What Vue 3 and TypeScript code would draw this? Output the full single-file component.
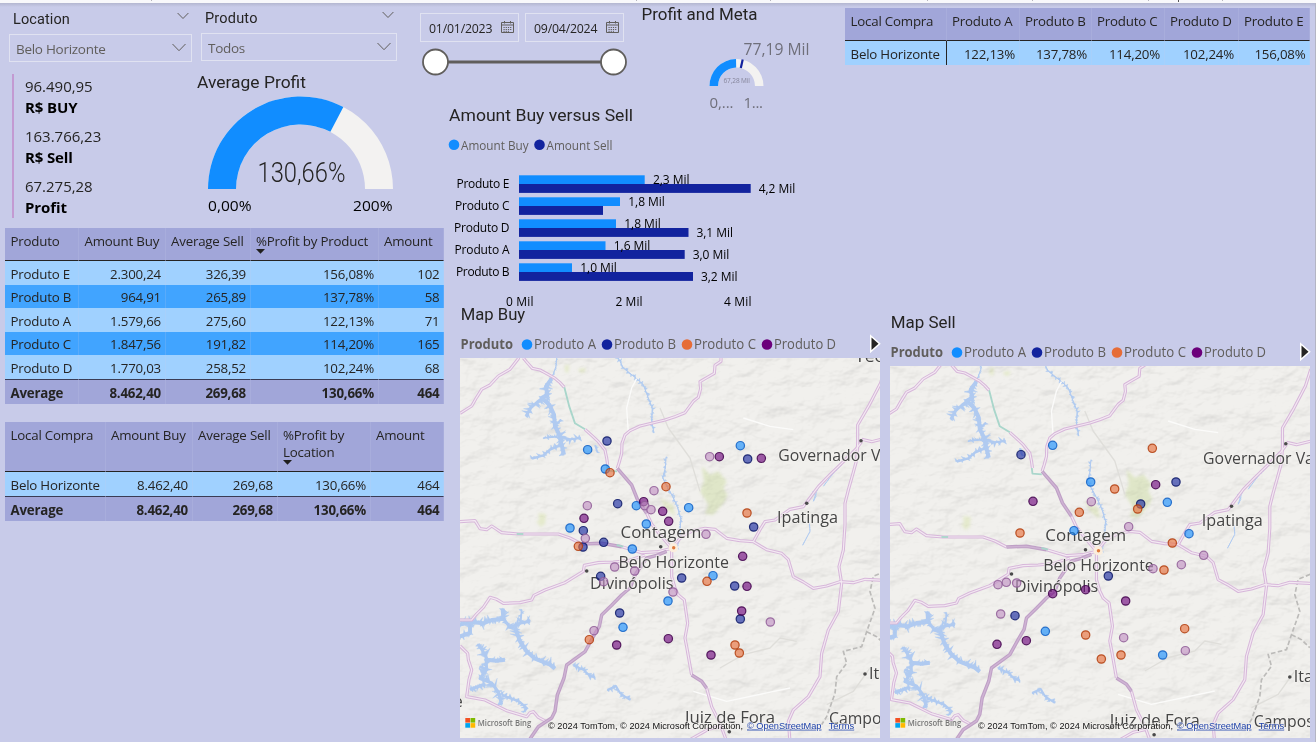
<script setup lang="ts">
type Pt = [number, number]
type Product = 'A' | 'B' | 'C' | 'D' | 'E'

interface DataTable {
  id: string
  columns: { label: string; sorted?: boolean }[]
  rows: string[][]
  total?: string[]
}

const productTable: DataTable = {
  id: 'products',
  columns: [
    { label: 'Produto' },
    { label: 'Amount Buy' },
    { label: 'Average Sell' },
    { label: '%Profit by Product', sorted: true },
    { label: 'Amount' },
  ],
  rows: [
    ['Produto E', '2.300,24', '326,39', '156,08%', '102'],
    ['Produto B', '964,91', '265,89', '137,78%', '58'],
    ['Produto A', '1.579,66', '275,60', '122,13%', '71'],
    ['Produto C', '1.847,56', '191,82', '114,20%', '165'],
    ['Produto D', '1.770,03', '258,52', '102,24%', '68'],
  ],
  total: ['Average', '8.462,40', '269,68', '130,66%', '464'],
}

const locationTable: DataTable = {
  id: 'locations',
  columns: [
    { label: 'Local Compra' },
    { label: 'Amount Buy' },
    { label: 'Average Sell' },
    { label: '%Profit by Location', sorted: true },
    { label: 'Amount' },
  ],
  rows: [['Belo Horizonte', '8.462,40', '269,68', '130,66%', '464']],
  total: ['Average', '8.462,40', '269,68', '130,66%', '464'],
}

const matrix: DataTable = {
  id: 'matrix',
  columns: ['Local Compra', 'Produto A', 'Produto B', 'Produto C', 'Produto D', 'Produto E'].map((label) => ({ label })),
  rows: [['Belo Horizonte', '122,13%', '137,78%', '114,20%', '102,24%', '156,08%']],
}

const cards = [
  { value: '96.490,95', label: 'R$ BUY' },
  { value: '163.766,23', label: 'R$ Sell' },
  { value: '67.275,28', label: 'Profit' },
]

const filters = [
  { title: 'Location', value: 'Belo Horizonte', id: 'location' },
  { title: 'Produto', value: 'Todos', id: 'product' },
]

const dates = ['01/01/2023', '09/04/2024']

/* Annular sector; angles in degrees measured clockwise from the left end. */
function arc(cx: number, cy: number, outer: number, inner: number, from: number, to: number): string {
  const at = (r: number, deg: number) => {
    const a = (deg * Math.PI) / 180
    return `${(cx - r * Math.cos(a)).toFixed(2)} ${(cy - r * Math.sin(a)).toFixed(2)}`
  }
  return `M${at(outer, from)}A${outer} ${outer} 0 0 1 ${at(outer, to)}L${at(inner, to)}A${inner} ${inner} 0 0 0 ${at(inner, from)}Z`
}

const bars = [
  { name: 'Produto E', nameW: 53, buy: 125.7, buyLabel: '2,3 Mil', sell: 231.7, sellLabel: '4,2 Mil' },
  { name: 'Produto C', nameW: 54.5, buy: 101, buyLabel: '1,8 Mil', sell: 84, sellLabel: '' },
  { name: 'Produto D', nameW: 55.5, buy: 97, buyLabel: '1,8 Mil', sell: 169.5, sellLabel: '3,1 Mil' },
  { name: 'Produto A', nameW: 55, buy: 86.5, buyLabel: '1,6 Mil', sell: 165.7, sellLabel: '3,0 Mil' },
  { name: 'Produto B', nameW: 53.5, buy: 53, buyLabel: '1,0 Mil', sell: 174, sellLabel: '3,2 Mil' },
]

/* Map geography, in thirds of a pixel. */
const roads: string[] = [
  'M0 166L35 144L50 118L65 94L90 81L115 54L150 34L175 2L178 -10',
  'M190 0L200 12L217 31L240 36L255 44L285 61L300 74L313 88',
  'M375 214L395 232L415 251L435 276L440 300L443 321',
  'M783 -10L783 10L765 22L763 46L735 62L720 71L722 92L715 118L700 130L675 164L645 176L615 186L540 204L510 218L495 231L486 256L485 286L478 312L472 331',
  'M560 466L575 498L600 530L635 571',
  'M0 491L45 488L60 512L80 515L95 504L125 524L175 528L295 528L330 540L365 558',
  'M485 566L545 584L595 581L635 571',
  'M0 786L35 786L50 768L70 748L90 718L110 724L130 736L180 734L215 726L222 712L255 696L315 674L370 640L373 622L415 614L460 612L505 608L555 591',
  'M0 864L23 886L25 905L35 936L27 965L20 1016L75 1026L140 1058L200 1076L210 1064L220 1061L235 1078L258 1090',
  'M635 576L635 656L645 690L655 711L673 726L683 796L675 840L680 866L695 951',
  'M740 991L755 1046L780 1096L800 1150',
  'M640 566L665 535L700 518L735 511L765 514L800 541L840 548L880 551L920 575L965 586L985 605L1000 656L1030 672L1060 691L1100 684L1140 671L1180 674L1215 664L1290 668',
  'M880 551L900 515L915 491L945 486L990 454L1030 446L1045 426L1075 386L1110 350L1145 316L1190 271L1205 251',
  'M1278 25L1262 75L1225 146L1193 201L1193 256L1190 306L1178 350L1165 396L1155 436L1155 501L1150 576L1137 626L1145 676L1135 761L1105 816L1085 886L1080 956L1045 1016L1000 1056L985 1090L990 1150',
  'M1205 244L1235 251L1280 240',
  'M690 1145L745 1114L780 1106',
]
const trunkRoads: string[] = [
  'M472 331L515 381L533 426L560 466',
  'M365 558L425 556L485 566',
  'M620 580L590 592L560 600L525 651L510 690L485 711L455 742L425 771L418 805L400 836L375 881L320 921L312 960L292 1011L285 1060L275 1080L235 1106L205 1150',
  'M695 951L725 970L740 991',
]
const tealRoads: string[] = ['M313 88L328 146L345 196L375 214', 'M441 321L443 338L471 340', 'M470 561L490 566', 'M170 528L190 528']

/* Polylines of water bodies with their main width. */
const water: { pts: Pt[]; w: number; spike: number }[] = [
  { pts: [[290, 0], [288, 25], [275, 62]], w: 3, spike: 5 },
  { pts: [[275, 62], [258, 85], [262, 110], [245, 120], [268, 140], [282, 170], [285, 205], [298, 230], [305, 262], [312, 290]], w: 12, spike: 20 },
  { pts: [[262, 110], [232, 132], [212, 150], [198, 175]], w: 9, spike: 20 },
  { pts: [[298, 235], [330, 244], [362, 240]], w: 6, spike: 16 },
  { pts: [[305, 260], [270, 275], [250, 292], [216, 302]], w: 7, spike: 12 },
  { pts: [[285, 205], [303, 185]], w: 5, spike: 12 },
  { pts: [[292, 236], [250, 240]], w: 5, spike: 10 },
  { pts: [[475, 0], [490, 30], [530, 62], [550, 80], [565, 120], [577, 150], [575, 190], [582, 225]], w: 3, spike: 9 },
  { pts: [[618, 298], [616, 330], [608, 360], [630, 400], [650, 440], [662, 480], [660, 540], [648, 575]], w: 3, spike: 8 },
  { pts: [[405, 262], [413, 284]], w: 5, spike: 8 },
  { pts: [[0, 800], [35, 792], [70, 796], [95, 786], [130, 782], [128, 752]], w: 12, spike: 22 },
  { pts: [[0, 835], [30, 825], [30, 798]], w: 12, spike: 18 },
  { pts: [[130, 782], [150, 808], [178, 796], [210, 790]], w: 9, spike: 20 },
  { pts: [[182, 796], [185, 755]], w: 5, spike: 10 },
  { pts: [[165, 808], [180, 850], [200, 880], [225, 902], [270, 920], [285, 932]], w: 12, spike: 20 },
  { pts: [[55, 858], [78, 895], [80, 935], [60, 962], [95, 975], [115, 1002], [125, 1040]], w: 9, spike: 22 },
  { pts: [[78, 905], [110, 908], [135, 905]], w: 12, spike: 12 },
  { pts: [[80, 935], [60, 925]], w: 8, spike: 12 },
  { pts: [[30, 995], [75, 978]], w: 9, spike: 16 },
  { pts: [[125, 1012], [155, 1022], [180, 1032], [200, 1050], [193, 1062]], w: 7, spike: 14 },
  { pts: [[340, 922], [372, 936], [390, 955], [405, 958]], w: 6, spike: 14 },
  { pts: [[442, 996], [468, 984], [480, 1005], [510, 1026]], w: 6, spike: 12 },
  { pts: [[1058, 400], [1068, 415], [1060, 430], [1075, 385]], w: 2, spike: 3 },
  { pts: [[1090, 385], [1120, 345], [1145, 320]], w: 3, spike: 2 },
  { pts: [[1048, 492], [1050, 520], [1028, 562]], w: 3, spike: 2 },
]

/* Repeatable noise so that inlets keep their place between renders. */
function noise(n: number): number {
  const v = Math.sin(n * 127.1 + 311.7) * 43758.5453
  return v - Math.floor(v)
}

/* Short jagged inlets on both sides of a shore line. */
function inlets(pts: Pt[], size: number, seed: number): string {
  let d = ''
  let k = seed * 50
  const half = Math.min(4.5, size / 3)
  for (let i = 1; i < pts.length; i++) {
    const [ax, ay] = pts[i - 1]
    const [bx, by] = pts[i]
    const len = Math.hypot(bx - ax, by - ay)
    const n = Math.max(1, Math.round(len / 4.5))
    const ux = (bx - ax) / len
    const uy = (by - ay) / len
    for (let j = 0; j < n; j++) {
      const t = (j + noise(++k)) / n
      const side = noise(++k) > 0.5 ? 1 : -1
      const l = size * (0.3 + noise(++k) * 0.75)
      const lean = (noise(++k) - 0.5) * l * 1.6
      const x = ax + (bx - ax) * t
      const y = ay + (by - ay) * t
      const ex = x - uy * side * l + ux * lean
      const ey = y + ux * side * l + uy * lean
      d += `M${(x - ux * half).toFixed(1)} ${(y - uy * half).toFixed(1)}L${ex.toFixed(1)} ${ey.toFixed(1)}L${(x + ux * half).toFixed(1)} ${(y + uy * half).toFixed(1)}Z`
    }
  }
  return d
}

const lakes = water.map((body, i) => ({
  line: 'M' + body.pts.map((p) => p.join(' ')).join('L'),
  shore: inlets(body.pts, body.spike, i + 1),
  w: body.w,
}))

const places = [
  { name: 'Teófilo Otoni', x: 395, y: 4.3, w: 106 },
  { name: 'Governador Valadares', x: 318.3, y: 103.3, w: 165 },
  { name: 'Ipatinga', x: 317, y: 164.7, w: 61 },
  { name: 'Contagem', x: 160.5, y: 179.9, w: 81 },
  { name: 'Belo Horizonte', x: 158.5, y: 210.3, w: 110.5 },
  { name: 'Divinópolis', x: 130, y: 231.3, w: 83.5 },
  { name: 'Juiz de Fora', x: 225, y: 364.9, w: 90 },
  { name: 'Campos', x: 369, y: 366, w: 60 },
  { name: 'Itaperuna', x: 409, y: 321.3, w: 73 },
]
const townDots: Pt[] = [[401, 82.7], [346.7, 145.3], [200.7, 188.7], [126.7, 213], [269.3, 373.7], [405, 316]]

const palette: Record<Product, { fill: string; stroke: string }> = {
  A: { fill: '#118dff', stroke: '#0f5fc4' },
  B: { fill: '#12239e', stroke: '#0c1766' },
  C: { fill: '#e66c37', stroke: '#b23c0c' },
  D: { fill: '#6b007b', stroke: '#41004b' },
  E: { fill: '#c08fc4', stroke: '#8f5d96' },
}

interface MapPanel {
  id: string
  title: string
  height: number
  shift: Pt
  points: Record<Product, Pt[]>
}

const maps: MapPanel[] = [
  {
    id: 'buy',
    title: 'Map Buy',
    height: 380,
    shift: [0, 0],
    points: {
      A: [[382, 274], [435, 332], [528, 442], [558, 497], [329, 509], [516, 572], [488, 807], [623, 728], [758, 652], [840, 262], [685, 448]],
      B: [[440, 248], [472, 436], [369, 517], [368, 566], [430, 552], [421, 654], [478, 764], [862, 302], [880, 506], [664, 659], [823, 683], [840, 782]],
      C: [[449, 343], [617, 385], [860, 464], [354, 564], [387, 844], [740, 669], [824, 860], [837, 884]],
      D: [[550, 430], [607, 459], [625, 489], [371, 480], [777, 295], [903, 300], [847, 594], [860, 684], [844, 758], [752, 890], [624, 841], [469, 860]],
      E: [[381, 442], [581, 397], [553, 442], [572, 454], [748, 295], [375, 540], [463, 626], [523, 638], [430, 670], [401, 817], [737, 528], [638, 701], [930, 791]],
    },
  },
  {
    id: 'sell',
    title: 'Map Sell',
    height: 372,
    shift: [-5.2, -5],
    points: {
      A: [[487, 237], [601, 347], [831, 408], [551, 493], [896, 502], [465, 795], [817, 866]],
      B: [[392, 265], [857, 347], [751, 413], [654, 629], [374, 748]],
      C: [[786, 246], [673, 368], [567, 438], [742, 428], [389, 500], [846, 530], [821, 611], [586, 806], [883, 787], [633, 878], [692, 866]],
      D: [[428, 405], [796, 355], [487, 682], [586, 670], [706, 704], [320, 834], [408, 823]],
      E: [[603, 406], [715, 481], [940, 567], [873, 595], [788, 607], [323, 655], [348, 648], [379, 650], [331, 743], [700, 814], [885, 853]],
    },
  },
]

const order: Product[] = ['A', 'B', 'C', 'D', 'E']
const legend: Product[] = ['A', 'B', 'C', 'D']
</script>

<template>
  <div class="page">
    <svg class="strip" width="1316" height="3" viewBox="0 0 1316 3">
      <path d="M151.5 0v1M636.5 0v1M770.5 0v1M927.5 0v1M1032.500 0v1M1148.500 0v1M1222.500 0v1" stroke="#b5b5bd" />
      <path d="M1178.500 0v2" stroke="#555" />
    </svg>

    <main class="report">
      <section class="left">
        <div class="filters">
          <div v-for="f in filters" :key="f.id" class="filter" :class="f.id">
            <header>
              <span class="title">{{ f.title }}</span>
              <svg width="12" height="8" viewBox="0 0 12 8"><path d="M.6 1L6 6.500L11.400 1" class="chevron" /></svg>
            </header>
            <div class="select">
              <span>{{ f.value }}</span>
              <svg width="14" height="9" viewBox="0 0 14 9"><path d="M.5 1L7 7.700L13.500 1" class="chevron" /></svg>
            </div>
          </div>
        </div>

        <div class="summary">
          <dl class="cards">
            <div v-for="c in cards" :key="c.label">
              <dd>{{ c.value }}</dd>
              <dt>{{ c.label }}</dt>
            </div>
          </dl>
          <svg class="gauge" width="215" height="150" viewBox="190 70 215 150">
            <text class="din" x="197" y="88" textLength="109" lengthAdjust="spacingAndGlyphs">Average Profit</text>
            <path :d="arc(300.5, 189, 92.500, 64.500, 0, 180)" fill="#f3f2f1" />
            <path :d="arc(300.5, 189, 92.500, 64.500, 0, 117.600)" fill="#118dff" />
            <text class="thin" x="257.500" y="181.500" font-size="28.500" textLength="88" lengthAdjust="spacingAndGlyphs">130,66%</text>
            <text x="208" y="211" font-size="15" textLength="43.500" lengthAdjust="spacingAndGlyphs">0,00%</text>
            <text x="353" y="211" font-size="15" textLength="39.500" lengthAdjust="spacingAndGlyphs">200%</text>
          </svg>
        </div>

        <table v-for="t in [productTable, locationTable]" :key="t.id" class="grid" :class="t.id">
          <colgroup><col v-for="c in t.columns" :key="c.label" /></colgroup>
          <thead>
            <tr>
              <th v-for="c in t.columns" :key="c.label">
                {{ c.label }}
                <svg v-if="c.sorted" class="sort" width="9" height="5" viewBox="0 0 9 5"><path d="M0 0H9L4.500 4.800Z" fill="#201f1e" /></svg>
              </th>
            </tr>
          </thead>
          <tbody>
            <tr v-for="r in t.rows" :key="r[0]"><td v-for="(v, i) in r" :key="i">{{ v }}</td></tr>
          </tbody>
          <tfoot>
            <tr><td v-for="(v, i) in t.total" :key="i">{{ v }}</td></tr>
          </tfoot>
        </table>
      </section>

      <section class="right">
        <div class="upper">
          <div class="metrics">
            <div class="controls">
              <div class="slicer">
                <div class="dates">
                  <div v-for="d in dates" :key="d" class="date">
                    <span>{{ d }}</span>
                    <svg width="13" height="13" viewBox="0 0 13 13" fill="none" stroke="#605e5c">
                      <path d="M.5 1.500H12.500V11.500H.5ZM.5 4H12.500M3.500 0V2.500M9.500 0V2.500" />
                      <path d="M2.500 6.500H11M2.500 8.500H11M2.500 10.300H8" stroke-dasharray="1.200 1" />
                    </svg>
                  </div>
                </div>
                <svg class="track" width="207" height="28" viewBox="0 0 207 28">
                  <path d="M15 14H194" stroke="#605e5c" stroke-width="3" />
                  <circle cx="15.500" cy="14" r="12.500" /><circle cx="193.500" cy="14" r="12.500" />
                </svg>
              </div>
              <svg class="meta" width="200" height="112" viewBox="638 3 200 112">
                <text class="din" x="641.500" y="20" textLength="116" lengthAdjust="spacingAndGlyphs">Profit and Meta</text>
                <text class="muted" x="743.500" y="55" font-size="15.500" textLength="66" lengthAdjust="spacingAndGlyphs">77,19 Mil</text>
                <path :d="arc(736.500, 86, 27, 18.500, 0, 180)" fill="#f3f2f1" />
                <path :d="arc(736.500, 86, 27, 18.500, 0, 89)" fill="#118dff" />
                <path d="M742.700 59.500L740.800 68" stroke="#12239e" stroke-width="2.200" />
                <text x="723.500" y="83" font-size="6.500" fill="#85859a" textLength="26.500">67,28 Mil</text>
                <text class="muted" x="709.500" y="108" font-size="15" textLength="24">0,...</text>
                <text class="muted" x="743.500" y="108" font-size="15" textLength="19.500">1...</text>
              </svg>
            </div>

            <svg class="chart" width="380" height="207" viewBox="440 102 380 207">
              <text class="din" x="449" y="121" textLength="184" lengthAdjust="spacingAndGlyphs">Amount Buy versus Sell</text>
              <circle cx="454" cy="144.700" r="5.300" fill="#118dff" />
              <text class="legend-text" x="461" y="149.500" textLength="67.500" lengthAdjust="spacingAndGlyphs">Amount Buy</text>
              <circle cx="539.500" cy="144.700" r="5.300" fill="#12239e" />
              <text class="legend-text" x="546.500" y="149.500" textLength="66" lengthAdjust="spacingAndGlyphs">Amount Sell</text>
              <g v-for="(b, i) in bars" :key="b.name" :transform="`translate(519 ${175.300 + i * 22})`">
                <rect :width="b.buy" height="8.700" fill="#118dff" />
                <rect y="8.700" :width="b.sell" height="8.900" fill="#12239e" />
                <text class="tick" :x="-9.500 - b.nameW" y="12.700" :textLength="b.nameW">{{ b.name }}</text>
                <text class="tick" :x="b.buy + 8.300" y="9" textLength="36.500">{{ b.buyLabel }}</text>
                <text v-if="b.sellLabel" class="tick" :x="b.sell + 8" y="17.700" textLength="36.500">{{ b.sellLabel }}</text>
              </g>
              <text class="tick" x="506" y="306" textLength="27.500">0 Mil</text>
              <text class="tick" x="615.500" y="306" textLength="27">2 Mil</text>
              <text class="tick" x="724" y="306" textLength="27.500">4 Mil</text>
            </svg>
          </div>

          <table class="grid matrix">
            <colgroup><col v-for="c in matrix.columns" :key="c.label" /></colgroup>
            <thead><tr><th v-for="c in matrix.columns" :key="c.label">{{ c.label }}</th></tr></thead>
            <tbody><tr v-for="r in matrix.rows" :key="r[0]"><td v-for="v in r" :key="v">{{ v }}</td></tr></tbody>
          </table>
        </div>

        <div class="maps">
          <article v-for="m in maps" :key="m.id" class="map" :class="m.id">
            <svg class="map-head" width="424" height="52" viewBox="0 0 424 52">
              <text class="din" x=".7" y="14" :textLength="m.id === 'buy' ? 64.500 : 65" lengthAdjust="spacingAndGlyphs">{{ m.title }}</text>
              <text class="legend-title" x=".5" y="43" textLength="52.500" lengthAdjust="spacingAndGlyphs">Produto</text>
              <g v-for="(p, i) in legend" :key="p" :transform="`translate(${67 + i * 80} 38.500)`">
                <circle r="5.300" :fill="palette[p].fill" />
                <text class="map-legend" x="7" y="4.600" textLength="62" lengthAdjust="spacingAndGlyphs">Produto {{ p }}</text>
              </g>
              <path d="M411.500 31.500L418.500 37.700L411.500 44Z" fill="#252423" stroke="#fff" stroke-width="3" paint-order="stroke" />
            </svg>
            <svg class="canvas" width="420" :height="m.height" :viewBox="`0 0 420 ${m.height}`">
              <defs>
                <filter :id="`relief-${m.id}`" x="0" y="0" width="100%" height="100%" color-interpolation-filters="sRGB">
                  <feTurbulence type="fractalNoise" baseFrequency=".035 .055" numOctaves="4" seed="7" />
                  <feDiffuseLighting surfaceScale="3.500" diffuseConstant="1.100" lighting-color="#fff">
                    <feDistantLight azimuth="235" elevation="62" />
                  </feDiffuseLighting>
                </filter>
              </defs>
              <rect width="420" :height="m.height" fill="#f1f0ed" />
              <g :transform="`translate(${m.shift[0]} ${m.shift[1]})`">
                <g transform="scale(.33333)">
                  <path d="M725 325L750 350L775 340L800 370L790 390L802 410L795 430L760 470L735 468L745 440L720 400L732 370Z" fill="#dfe6c8" class="park" />
                  <path d="M315 22L328 20L325 45L314 40ZM355 32L378 30L372 45L358 42ZM235 465L258 468L255 500L238 500ZM600 420L640 440L645 475L615 450ZM228 490L250 485L245 510Z" fill="#e4e9cc" class="park" />
                </g>
              </g>
              <rect width="420" :height="m.height" :filter="`url(#relief-${m.id})`" class="relief" />
              <g :transform="`translate(${m.shift[0]} ${m.shift[1]})`">
                <g transform="scale(.33333)" fill="none" stroke-linejoin="round">
                  <g v-for="(l, i) in lakes" :key="i" stroke="#b0caf1" fill="none">
                    <path :d="l.line" :stroke-width="l.w" />
                    <path :d="l.shore" fill="#b0caf1" stroke-width="1" />
                  </g>
                  <path d="M505 225L500 150L515 90L530 62M700 1000L800 1030L990 990M850 180L930 205L1000 215" stroke="#fbfbfa" stroke-width="4" />
                  <path d="M600 150L625 210L690 300L720 400M780 930L850 890L930 870L960 840L1010 850M1100 1040L1180 1000L1230 930" stroke="#dfdeda" stroke-width="4" />
                  <path d="M1276 640L1240 655L1230 701L1245 751L1220 821L1205 866L1150 880L1160 916L1130 956L1125 1006L1100 1076L1085 1100M1220 821L1250 836L1275 860" class="border" />
                  <path v-for="d in roads" :key="'a' + d" :d="d" stroke="#d7b7da" stroke-width="9.500" />
                  <path v-for="d in roads" :key="'b' + d" :d="d" stroke="#f3e9f2" stroke-width="3.500" />
                  <path v-for="d in trunkRoads" :key="'c' + d" :d="d" stroke="#bfa0c6" stroke-width="10.500" />
                  <path v-for="d in trunkRoads" :key="'d' + d" :d="d" stroke="#cfb4d4" stroke-width="4" />
                  <path v-for="d in tealRoads" :key="'e' + d" :d="d" stroke="#a9d6cb" stroke-width="5.500" />
                  <circle cx="640" cy="569" r="14" fill="#fbeedd" />
                </g>
                <circle v-for="d in townDots" :key="d[0]" :cx="d[0]" :cy="d[1]" r="1.800" fill="#4a4a4a" />
                <circle cx="213.700" cy="189.700" r="1.700" fill="#e07a3c" />
                <g class="places">
                  <text v-for="p in places" :key="p.name" :x="p.x" :y="p.y" :textLength="p.w" lengthAdjust="spacingAndGlyphs">{{ p.name }}</text>
                  <text v-if="m.id === 'buy'" x="-6.500" y="349">e</text>
                </g>
              </g>
              <g transform="scale(.33333)" stroke-width="3.700" fill-opacity=".62">
                <template v-for="p in order" :key="p">
                  <circle v-for="(c, i) in m.points[p]" :key="i" :cx="c[0] + 1" :cy="c[1] + 1" r="12.500" :fill="palette[p].fill" :stroke="palette[p].stroke" stroke-opacity=".85" />
                </template>
              </g>
              <g :transform="`translate(0 ${m.height - 380})`">
                <path d="M5.300 360h4.700v4.600H5.300Z" fill="#f25022" />
                <path d="M10.500 360h4.700v4.600h-4.700Z" fill="#7fba00" />
                <path d="M5.300 365.100h4.700v4.600H5.300Z" fill="#00a4ef" />
                <path d="M10.500 365.100h4.700v4.600h-4.700Z" fill="#ffb900" />
                <text class="bing" x="17.700" y="367.800" textLength="53.500" lengthAdjust="spacingAndGlyphs">Microsoft Bing</text>
                <g class="credits">
                  <text x="88" y="370.500" textLength="195" lengthAdjust="spacingAndGlyphs">© 2024 TomTom, © 2024 Microsoft Corporation,</text>
                  <text class="link" x="287" y="370.500" textLength="74.500" lengthAdjust="spacingAndGlyphs">© OpenStreetMap</text>
                  <text class="link" x="368.700" y="370.500" textLength="25.500" lengthAdjust="spacingAndGlyphs">Terms</text>
                </g>
              </g>
            </svg>
          </article>
        </div>
      </section>
    </main>
  </div>
</template>

<style>
html, body { margin: 0; overflow: hidden; background: #c8cbe9; }
</style>

<style scoped>
.page {
  width: 1316px;
  height: 742px;
  overflow: hidden;
  box-sizing: border-box;
  background: #c8cbe9;
  font-family: "Open Sans", "Noto Sans", sans-serif;
  color: #252423;
}
svg { display: block; flex: none; }
.strip { background: #f8f8fb; }
.report {
  display: flex;
  height: 739px;
  box-sizing: border-box;
  border-right: 1px solid #b4b5c4;
  background: linear-gradient(#b3b6d0, #c8cbe9 4px);
}
.left { width: 410px; flex: none; }
.right { width: 905px; flex: none; }

.din { font-family: Roboto, sans-serif; font-size: 16.5px; fill: #252423; }
.title { font-family: Roboto, sans-serif; font-size: 14.5px; letter-spacing: .1px; line-height: 20px; }
.product .title { letter-spacing: .2px; }
.chevron { fill: none; stroke: #605e5c; stroke-width: 1; }

.filters { display: flex; gap: 9px; padding-left: 9px; height: 67px; }
.filter header { display: flex; justify-content: space-between; padding: 0 3px 0 4px; height: 18px; }
.filter header svg { margin-top: 2px; }
.location { width: 183px; padding-top: 7px; }
.product { width: 196px; padding-top: 6px; }
.select {
  display: flex;
  align-items: center;
  justify-content: space-between;
  height: 28px;
  margin-top: 6px;
  padding: 0 5px 0 6px;
  box-sizing: border-box;
  border: 1px solid #e0e2f1;
  color: #605e5c;
  font-size: 13.5px;
  letter-spacing: -.28px;
}
.select span { padding-top: 2px; }
.select svg { margin-top: -2px; }

.summary { display: flex; height: 158px; }
.cards { width: 178px; height: 144px; margin: 4px 0 0 12px; padding-left: 11px; box-sizing: border-box; border-left: 2px solid #c39ad2; }
.cards div { height: 50.2px; }
.cards dd, .cards dt { margin: 0; line-height: 21px; font-size: 15px; }
.cards dd { padding-top: 2px; letter-spacing: -.02px; }
.cards dt { font-size: 15px; font-weight: 700; color: #000; letter-spacing: -.1px; }
.cards div:nth-child(2) dt { letter-spacing: -.15px; }
.gauge text:not(.din):not(.thin) { fill: #000; }
.thin { font-family: Roboto, sans-serif; font-weight: 300; fill: #252423; }
.muted { fill: #6f6f7a; }

.grid { border-collapse: separate; border-spacing: 0; table-layout: fixed; font-size: 13.3px; letter-spacing: -.2px; }
.grid th, .grid td { box-sizing: border-box; padding: 0 3.5px 0 5.5px; white-space: nowrap; line-height: 17px; border-right: 1px solid rgba(200, 203, 233, .18); }
.grid th { text-align: left; font-weight: 400; vertical-align: top; background: #a1a6d9; border-bottom: 1.5px solid #252423; }
.grid td { text-align: right; }
.grid td:first-child { text-align: left; }
.grid tbody td { height: 23.6px; background: #a0d1ff; padding-top: 3px; }
.grid tbody tr:nth-child(even) td { background: #41a4ff; padding-top: 2px; }
.grid tfoot td { height: 25px; font-weight: 700; background: #a1a6d9; border-top: 1px solid #3a3c55; padding-top: 3px; letter-spacing: -.2px; }
.products { width: 439px; height: 176px; margin: 0 0 18px 5px; }
.products th { height: 33px; padding-top: 5px; }
.products col:nth-child(1) { width: 74px; }
.products col:nth-child(2) { width: 86.5px; }
.products col:nth-child(3) { width: 85px; }
.products col:nth-child(4) { width: 128px; }
.products col:nth-child(5) { width: 65.5px; }
.locations { width: 439px; height: 99px; margin-left: 5px; }
.locations th { height: 50px; padding-top: 5px; white-space: normal; }
.locations col:nth-child(1) { width: 100.5px; }
.locations col:nth-child(2) { width: 87px; }
.locations col:nth-child(3) { width: 85px; }
.locations col:nth-child(4) { width: 93px; }
.locations col:nth-child(5) { width: 73.5px; }
.sort { margin: -1px 0 0 0; }

.upper { display: flex; height: 303px; }
.metrics { width: 435px; flex: none; }
.controls { display: flex; height: 99px; }
.slicer { width: 218px; padding: 10px 0 0 10px; box-sizing: border-box; }
.meta { margin-left: 10px; }
.dates { display: flex; gap: 6px; }
.date {
  display: flex;
  align-items: center;
  justify-content: space-between;
  width: 99px;
  height: 29px;
  box-sizing: border-box;
  padding: 2px 4px 0 8px;
  border: 1px solid #e0e2f1;
  font-size: 12.3px;
  letter-spacing: -.2px;
}
.date svg { margin-top: -3px; }
.track { margin-top: 6px; }
.track circle { fill: #fff; stroke: #605e5c; stroke-width: 1.8; }
.chart { margin-left: 30px; }
.legend-text { font-size: 13px; fill: #605e5c; }
.tick { font-size: 12px; fill: #000; }

.matrix { width: 465px; height: 57px; margin-top: 5px; }
.matrix th { height: 33px; padding-top: 5px; }
.matrix td { height: 24px; }
.matrix tbody td:first-child { border-right: 1.5px solid #252423; }
.matrix col:nth-child(1) { width: 101.5px; }
.matrix col:nth-child(2) { width: 73px; }
.matrix col:nth-child(3) { width: 72px; }
.matrix col:nth-child(4) { width: 73px; }
.matrix col:nth-child(5) { width: 74px; }
.matrix col:nth-child(6) { width: 71.5px; }

.maps { display: flex; gap: 6px; padding-left: 50px; }
.map { width: 424px; }
.map.sell { padding-top: 8px; }
.legend-title { font-size: 13.8px; font-weight: 700; fill: #605e5c; }
.map-legend { font-size: 13.8px; fill: #605e5c; }
.relief { opacity: .17; mix-blend-mode: multiply; }
.park { filter: blur(4px); }
.border { stroke: #bcbbb9; stroke-width: 5; stroke-dasharray: 14 7; }
.places text { font-size: 16.5px; font-weight: 500; fill: #454545; stroke: #f3f2ef; stroke-width: 2px; stroke-opacity: .7; paint-order: stroke; }
.bing { font-size: 9px; font-weight: 600; fill: #777; }
.credits text { font-family: "Liberation Sans", Arial, sans-serif; font-size: 9.4px; fill: #111; stroke: #f5f4f1; stroke-width: 1.5px; stroke-opacity: .6; paint-order: stroke; }
.credits .link { fill: #1b3fa8; text-decoration: underline; }
</style>
